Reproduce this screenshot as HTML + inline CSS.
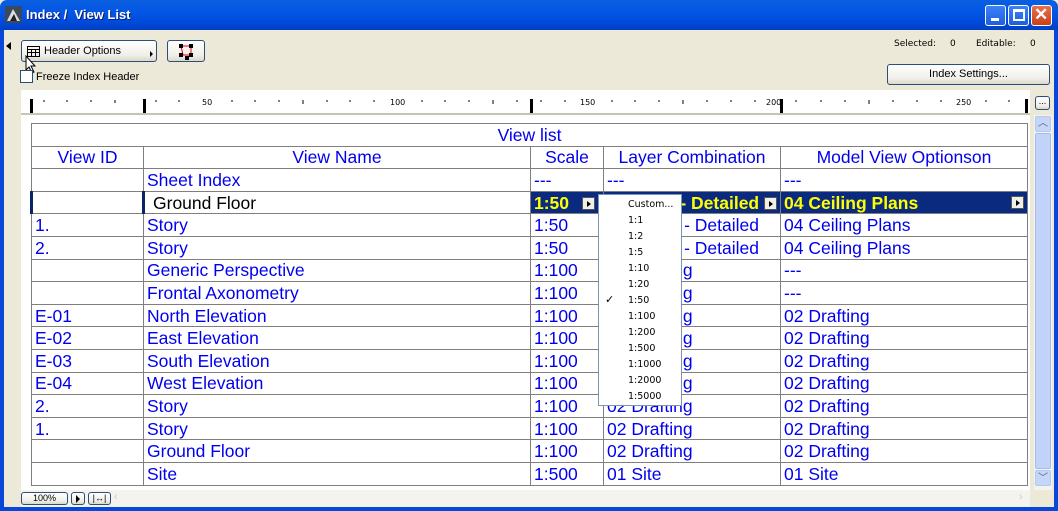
<!DOCTYPE html>
<html><head><meta charset="utf-8"><style>
*{box-sizing:border-box;margin:0;padding:0}
body{width:1058px;height:511px;overflow:hidden;background:#ece9d8;font-family:"Liberation Sans",Arial,sans-serif;position:relative}
.abs{position:absolute}
#title{left:0;top:0;width:1058px;height:30px;background:linear-gradient(#0a5fe0,#0456e4 40%,#0048d8 80%,#0040c0);border-radius:7px 7px 0 0}
#title span{position:absolute;left:26px;top:7px;color:#fff;font-weight:bold;font-size:13px;text-shadow:1px 1px #0a1f7a}
.wb{position:absolute;top:5px;width:21px;height:21px;border:1px solid #fff;border-radius:3px;background:linear-gradient(#3b82f7,#1e5ee0)}
#lb{left:0;top:30px;width:4px;height:481px;background:#0848d8}
#rb{left:1054px;top:30px;width:4px;height:481px;background:#0848d8}
#bb{left:0;top:507px;width:1058px;height:4px;background:#0848d8}
.btn{position:absolute;border:1px solid #2d4d7a;border-radius:3px;background:linear-gradient(#fff,#f0efe8 70%,#dcd9cc);font-size:11px;color:#000}
.sm{font-size:9px;font-family:"DejaVu Sans",sans-serif}
#white{left:21px;top:90px;width:1009px;height:400px;background:#fff}
#ruler{left:21px;top:90px;width:1009px;height:25px;background:#fff;border-bottom:2px solid #c8c4b4}
table{position:absolute;left:30px;top:123px;border-collapse:collapse;table-layout:fixed}
td{border:1px solid #7f7f7f;height:22.6px;color:#0000ee;font-size:17.5px;padding:0 3px;white-space:nowrap;overflow:hidden;line-height:20px}
.c{text-align:center}
.r{text-align:right;padding-right:21px}
.sel{background:#0a2a80;color:#ffff00;font-weight:bold}
.mini{display:inline-block;width:13px;height:13px;border:1px solid #555;background:#f0f0e8;vertical-align:middle;position:relative}
.mini:after{content:"";position:absolute;left:4px;top:3px;border-left:4px solid #000;border-top:3px solid transparent;border-bottom:3px solid transparent}
#menu{left:598px;top:194px;width:84px;height:212px;background:#fff;border:1px solid #7a96b4;font-family:"DejaVu Sans",sans-serif;font-size:9.5px;color:#000}
#menu div{position:absolute;left:29px}
#sb{left:1034px;top:115px;width:18px;height:375px;background:#f4f3ee}
</style></head><body>
<div id="title" class="abs"><svg class="abs" style="left:5px;top:6px" width="17" height="17"><rect width="17" height="17" fill="#3a4a5a"/><path d="M2 15 L8 3 L15 15 Z" fill="#ddd"/><path d="M5 15 L9 8 L12 15Z" fill="#222"/></svg><span>Index /&nbsp; View List</span>
<div class="wb" style="left:985px"><div class="abs" style="left:5px;top:12px;width:8px;height:3px;background:#fff"></div></div>
<div class="wb" style="left:1008px"><div class="abs" style="left:4px;top:3px;width:12px;height:12px;border:2px solid #fff;border-top-width:3px"></div></div>
<div class="wb" style="left:1031px;background:linear-gradient(#e8704c,#c8401c)"><div class="abs" style="left:2px;top:-1px;color:#fff;font-weight:bold;font-size:17px">✕</div></div>
</div>
<div id="lb" class="abs"></div><div id="rb" class="abs"></div><div id="bb" class="abs"></div>
<div class="abs" style="left:6px;top:42px;border-right:5px solid #000;border-top:4px solid transparent;border-bottom:4px solid transparent"></div>
<div class="btn" style="left:21px;top:40px;width:136px;height:22px"><svg class="abs" style="left:5px;top:5px" width="13" height="11"><rect x=".5" y=".5" width="12" height="10" fill="none" stroke="#000"/><path d="M0 3.5H13M0 6.5H13M4.5 3V11M8.5 3V11" stroke="#000"/></svg><span class="abs" style="left:22px;top:4px">Header Options</span><div class="abs" style="left:128px;top:10px;border-left:3px solid #000;border-top:3px solid transparent;border-bottom:3px solid transparent"></div></div>
<div class="btn" style="left:167px;top:40px;width:38px;height:22px"><svg class="abs" style="left:9px;top:2px" width="20" height="18"><path d="M4 3H14V12H6Z" fill="none" stroke="#e00"/><rect x="2" y="1" width="4" height="4"/><rect x="12" y="1" width="4" height="4"/><rect x="2" y="10" width="4" height="4"/><rect x="12" y="10" width="4" height="4"/><rect x="8" y="13" width="4" height="4"/></svg></div>
<svg class="abs" style="left:25px;top:55px" width="14" height="20"><path d="M1 1V15L4 12L7 18L9 17L6 11H10Z" fill="#fff" stroke="#000"/></svg>
<div class="abs" style="left:20px;top:70px;width:13px;height:13px;border:1px solid #1c5180;background:#fff"></div>
<div class="abs" style="left:36px;top:71px;font-size:11px">Freeze Index Header</div>
<div class="abs sm" style="left:894px;top:39px">Selected:</div><div class="abs sm" style="left:950px;top:39px">0</div>
<div class="abs sm" style="left:976px;top:39px">Editable:</div><div class="abs sm" style="left:1030px;top:39px">0</div>
<div class="btn" style="left:887px;top:64px;width:163px;height:21px;text-align:center;line-height:19px">Index Settings...</div>
<div id="white" class="abs"></div>
<div id="ruler" class="abs"><svg width="1009" height="25">
<g fill="#000"><rect x="9" y="9" width="3" height="14"/><rect x="122" y="9" width="3" height="14"/><rect x="509" y="9" width="3" height="14"/><rect x="759" y="9" width="3" height="14"/><rect x="1004" y="9" width="3" height="14"/></g>
<g font-family="DejaVu Sans" font-size="8"><text x="181" y="15">50</text><text x="369" y="15">100</text><text x="559" y="15">150</text><text x="745" y="15">200</text><text x="935" y="15">250</text></g>
<g stroke="#000"><path d="M23 10v2M46 10v2M70 10v2M94 10v3M135 10v2M158 10v2M211 10v2M234 10v2M258 10v2M282 10v4M306 10v2M329 10v2M353 10v2M401 10v2M424 10v2M448 10v2M472 10v4M496 10v2M520 10v2M544 10v2M591 10v2M614 10v2M638 10v2M662 10v4M686 10v2M710 10v2M734 10v2M775 10v2M800 10v2M824 10v2M848 10v4M872 10v2M896 10v2M920 10v2M965 10v2M988 10v2"/></g></svg></div>
<div class="btn" style="left:1035px;top:96px;width:15px;height:14px;font-size:9px;text-align:center;line-height:8px">...</div>
<table>
<colgroup><col style="width:112px"><col style="width:387px"><col style="width:73px"><col style="width:177px"><col style="width:247px"></colgroup>
<tr><td colspan="5" class="c">View list</td></tr>
<tr><td class="c">View ID</td><td class="c">View Name</td><td class="c">Scale</td><td class="c">Layer Combination</td><td class="c">Model View Optionson</td></tr>
<tr><td></td><td>Sheet Index</td><td>---</td><td>---</td><td>---</td></tr>
<tr><td style="border-left:3px solid #0a246a"></td><td style="color:#000;border-left:3px solid #0a246a;padding-left:8px">Ground Floor</td><td class="sel">1:50 <span class="mini" style="margin-left:8px"></span></td><td class="sel" style="text-align:right;padding-right:3px">- Detailed <span class="mini"></span></td><td class="sel">04 Ceiling Plans<span class="mini" style="float:right;margin-top:3px"></span></td></tr>
<tr><td>1.</td><td>Story</td><td>1:50</td><td class="r">- Detailed</td><td>04 Ceiling Plans</td></tr>
<tr><td>2.</td><td>Story</td><td>1:50</td><td class="r">- Detailed</td><td>04 Ceiling Plans</td></tr>
<tr><td></td><td>Generic Perspective</td><td>1:100</td><td>02 Drafting</td><td>---</td></tr>
<tr><td></td><td>Frontal Axonometry</td><td>1:100</td><td>02 Drafting</td><td>---</td></tr>
<tr><td>E-01</td><td>North Elevation</td><td>1:100</td><td>02 Drafting</td><td>02 Drafting</td></tr>
<tr><td>E-02</td><td>East Elevation</td><td>1:100</td><td>02 Drafting</td><td>02 Drafting</td></tr>
<tr><td>E-03</td><td>South Elevation</td><td>1:100</td><td>02 Drafting</td><td>02 Drafting</td></tr>
<tr><td>E-04</td><td>West Elevation</td><td>1:100</td><td>02 Drafting</td><td>02 Drafting</td></tr>
<tr><td>2.</td><td>Story</td><td>1:100</td><td>02 Drafting</td><td>02 Drafting</td></tr>
<tr><td>1.</td><td>Story</td><td>1:100</td><td>02 Drafting</td><td>02 Drafting</td></tr>
<tr><td></td><td>Ground Floor</td><td>1:100</td><td>02 Drafting</td><td>02 Drafting</td></tr>
<tr><td></td><td>Site</td><td>1:500</td><td>01 Site</td><td>01 Site</td></tr>
</table>
<div id="menu" class="abs">
<div style="top:4px">Custom...</div><div style="top:20px">1:1</div><div style="top:36px">1:2</div><div style="top:52px">1:5</div><div style="top:68px">1:10</div><div style="top:84px">1:20</div><div style="top:100px">1:50</div><div style="top:116px">1:100</div><div style="top:132px">1:200</div><div style="top:148px">1:500</div><div style="top:164px">1:1000</div><div style="top:180px">1:2000</div><div style="top:196px">1:5000</div>
<div style="left:6px;top:98px;font-size:11px">✓</div>
</div>
<div id="sb" class="abs"><div class="abs" style="left:1px;top:1px;width:16px;height:16px;border:1px solid #b4c8f0;border-radius:2px;background:#c6d6f8;color:#4d6185;font-size:10px;text-align:center;line-height:14px">︿</div>
<div class="abs" style="left:1px;top:18px;width:16px;height:336px;border:1px solid #a8bcec;border-radius:2px;background:#c2d3fa"></div>
<div class="abs" style="left:1px;top:355px;width:16px;height:16px;border:1px solid #b4c8f0;border-radius:2px;background:#c6d6f8;color:#4d6185;font-size:10px;text-align:center;line-height:16px">﹀</div></div>
<div class="abs" style="left:21px;top:490px;width:1009px;height:17px;background:#f4f3ee"></div>
<div class="btn" style="left:21px;top:492px;width:47px;height:13px;font-size:9px;text-align:center;line-height:11px">100%</div>
<div class="btn" style="left:71px;top:492px;width:14px;height:13px"><div class="abs" style="left:4px;top:2px;border-left:4px solid #000;border-top:4px solid transparent;border-bottom:4px solid transparent"></div></div>
<div class="btn" style="left:88px;top:492px;width:23px;height:13px;font-size:9px;text-align:center;line-height:11px">|↔|</div>
<div class="abs" style="left:114px;top:491px;width:14px;height:15px;color:#ccc;font-size:11px">‹</div>
<div class="abs" style="left:1019px;top:491px;width:14px;height:15px;color:#ccc;font-size:11px">›</div>
</body></html>
